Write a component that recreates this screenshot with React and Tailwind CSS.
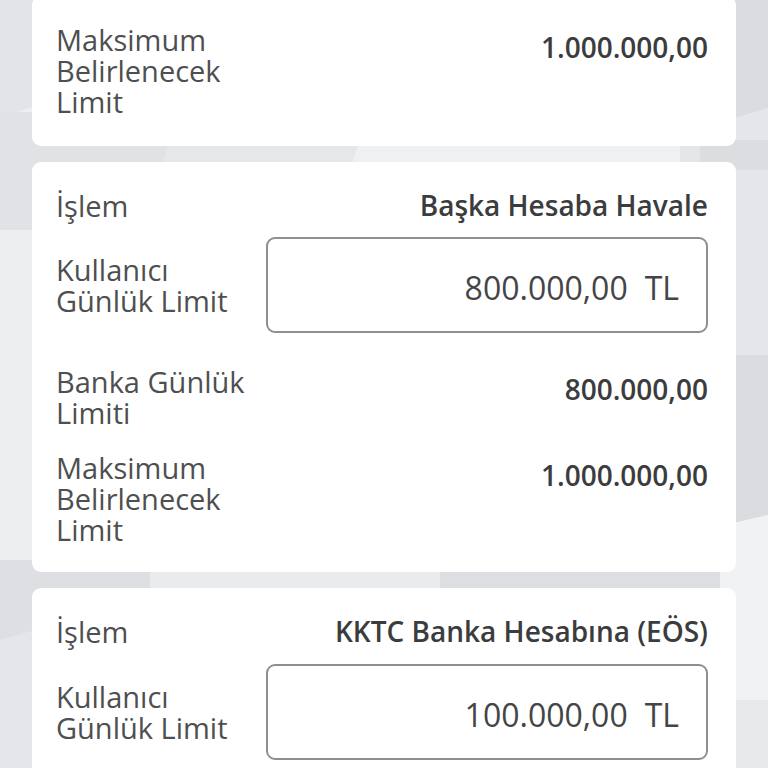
import React from 'react'

const FONT = { fontFamily: '"Open Sans", "Noto Sans", sans-serif' }

function Backdrop() {
  // faint faceted backdrop behind the cards
  return (
    <svg className="absolute inset-0 w-full h-full" viewBox="0 0 768 768" preserveAspectRatio="none">
      <rect width="768" height="768" fill="#eceef0" />
      <polygon points="0,0 140,0 140,70 0,118" fill="#e2e4e7" />
      <polygon points="0,112 170,112 170,230 0,230" fill="#e0e2e5" />
      <polygon points="170,140 360,140 350,170 160,170" fill="#e5e7ea" />
      <polygon points="360,140 700,140 700,170 350,170" fill="#eff0f2" />
      <polygon points="680,0 768,0 768,108 680,135" fill="#dadcdf" />
      <polygon points="680,135 768,108 768,355 680,355" fill="#e4e6e9" />
      <polygon points="700,140 768,140 768,170 700,170" fill="#dbdde0" />
      <polygon points="640,355 768,355 768,515 640,545" fill="#dadcdf" />
      <polygon points="640,545 768,515 768,700 640,700" fill="#f1f2f4" />
      <polygon points="600,700 768,700 768,768 600,768" fill="#e7e9eb" />
      <polygon points="0,560 150,560 150,600 0,640" fill="#dddfe2" />
      <polygon points="0,640 150,600 150,768 0,768" fill="#e4e6e9" />
      <polygon points="150,565 440,565 440,595 150,595" fill="#e9ebed" />
      <polygon points="440,565 720,565 720,595 440,595" fill="#dddee1" />
    </svg>
  )
}

function InfoRow({ label, value, offset = true }) {
  return (
    <div className="flex items-start justify-between">
      <div className="w-[205px] shrink-0 text-[29px] leading-[31px] text-[#4e4f51]">{label}</div>
      <div className={`text-right text-[28px] leading-[31px] font-semibold text-[#3b3c3e] ${offset ? 'pt-[8px]' : ''}`}>
        {value}
      </div>
    </div>
  )
}

function LimitInput({ amount }) {
  return (
    <div className="flex items-center justify-between">
      <div className="w-[205px] shrink-0 text-[29px] leading-[31px] text-[#4e4f51]">Kullanıcı Günlük Limit</div>
      <div className="w-[442px] h-[96px] rounded-[9px] border-2 border-[#8e8f91] bg-white flex items-center justify-end pr-[27px] pt-[5px] text-[32px] text-[#444547]">
        <span>{amount}</span>
        <span className="ml-[17px]">TL</span>
      </div>
    </div>
  )
}

function Card({ children, className = 'pb-[27px]' }) {
  return (
    <div className={`bg-white rounded-[9px] pl-6 pr-7 pt-[28px] ${className}`}>
      {children}
    </div>
  )
}

export default function App() {
  return (
    <div className="relative min-h-screen h-[768px] overflow-hidden" style={FONT}>
      <Backdrop />
      <div className="relative px-8 -mt-[4px] flex flex-col gap-4">
        <Card className="pb-[29px]">
          <InfoRow label="Maksimum Belirlenecek Limit" value="1.000.000,00" />
        </Card>

        <Card>
          <InfoRow label="İşlem" value="Başka Hesaba Havale" offset={false} />
          <div className="mt-4">
            <LimitInput amount="800.000,00" />
          </div>
          <div className="mt-[33px]">
            <InfoRow label="Banka Günlük Limiti" value="800.000,00" />
          </div>
          <div className="mt-6">
            <InfoRow label="Maksimum Belirlenecek Limit" value="1.000.000,00" />
          </div>
        </Card>

        <Card>
          <InfoRow label="İşlem" value="KKTC Banka Hesabına (EÖS)" offset={false} />
          <div className="mt-[17px]">
            <LimitInput amount="100.000,00" />
          </div>
        </Card>
      </div>
    </div>
  )
}
